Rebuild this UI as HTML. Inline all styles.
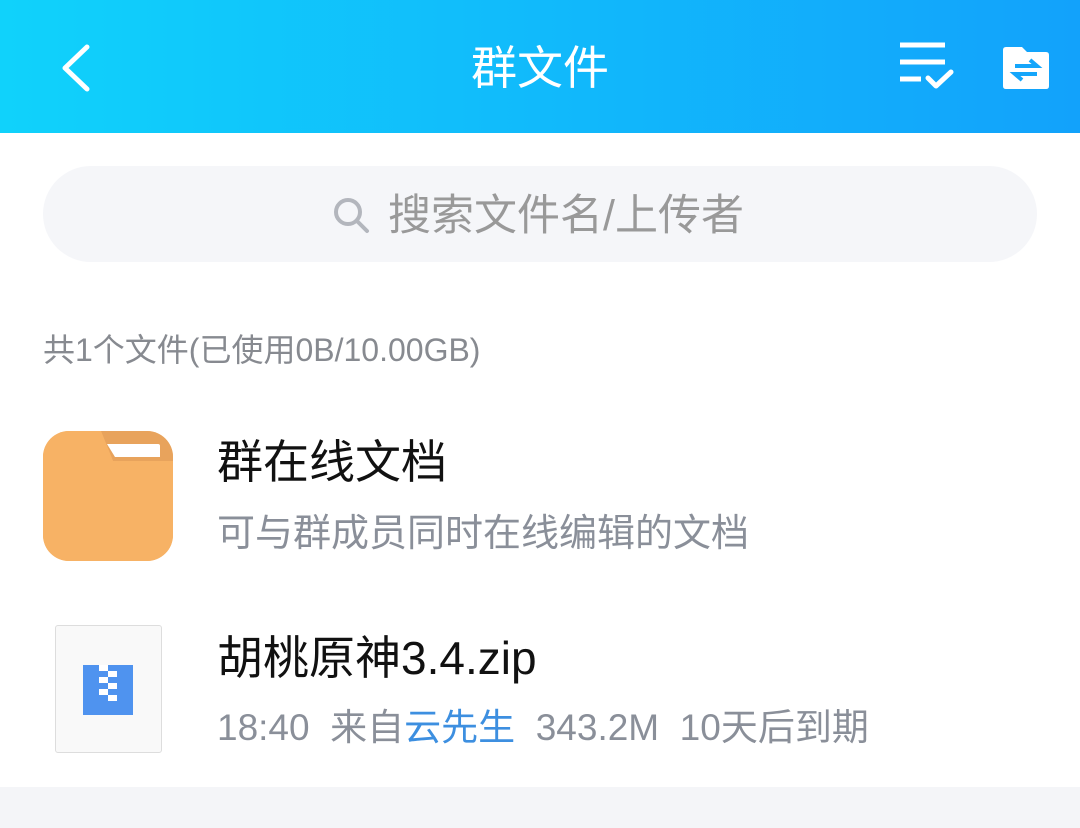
<html><head><style>
body{margin:0;width:1080px;height:828px;overflow:hidden;background:#fff;font-family:"Liberation Sans","Noto Sans CJK SC",sans-serif;position:relative}
.a{position:absolute;white-space:nowrap}
</style></head><body>
<div class="a" style="left:0;top:0;width:1080px;height:133px;background:linear-gradient(90deg,#10d2fb,#12a2fb)"></div>
<svg class="a" style="left:55px;top:42px" width="40" height="52"><path d="M32 5 L10 26 L32 47" stroke="#fff" stroke-width="5" fill="none" stroke-linecap="round" stroke-linejoin="round"/></svg>
<div class="a" style="left:0;width:1080px;top:40px;text-align:center;color:#fff;font-size:46px;line-height:56px">群文件</div>
<svg class="a" style="left:898px;top:40px" width="60" height="52"><g stroke="#fff" stroke-width="5"><path d="M2 5H47M2 22H47M2 39H23"/><path d="M30 38L38 46L53 32" fill="none" stroke-linecap="round" stroke-linejoin="round"/></g></svg>
<svg class="a" style="left:1002px;top:46px" width="48" height="45"><path d="M1 4Q1 1 4 1H20L25 6H44Q47 6 47 9V40Q47 43 44 43H4Q1 43 1 40Z" fill="#fff"/><g stroke="#14a6fb" stroke-width="4" fill="none"><path d="M13 20H35L28 14"/><path d="M35 28H13L20 34"/></g></svg>
<div class="a" style="left:43px;top:166px;width:994px;height:96px;border-radius:48px;background:#f5f6f9"></div>
<svg class="a" style="left:332px;top:196px" width="40" height="40"><circle cx="16" cy="16" r="12" stroke="#b3b6bd" stroke-width="4" fill="none"/><path d="M25 25L35 35" stroke="#b3b6bd" stroke-width="4" stroke-linecap="round"/></svg>
<div class="a" style="left:388px;top:190px;font-size:43px;line-height:52px;color:#999">搜索文件名/上传者</div>
<div class="a" style="left:43px;top:330px;font-size:32px;line-height:40px;color:#878a90">共1个文件(已使用0B/10.00GB)</div>
<svg class="a" style="left:43px;top:431px" width="130" height="130"><defs><clipPath id="c"><rect width="130" height="130" rx="26"/></clipPath></defs><g clip-path="url(#c)"><rect width="130" height="130" fill="#f7b265"/><path d="M58 0H130V30H70Z" fill="#e8a35c"/><path d="M64 13H115Q117 13 117 15V26H72Z" fill="#fff"/><rect x="0" y="30" width="130" height="100" fill="#f7b265"/><path d="M0 0H58L70 30H0Z" fill="#f7b265"/></g></svg>
<div class="a" style="left:217px;top:434px;font-size:46px;line-height:56px;color:#111">群在线文档</div>
<div class="a" style="left:217px;top:510px;font-size:38px;line-height:48px;color:#8a8f99">可与群成员同时在线编辑的文档</div>
<div class="a" style="left:55px;top:625px;width:105px;height:126px;background:#f9f9f9;border:1px solid #ddd;border-radius:3px"></div>
<svg class="a" style="left:83px;top:665px" width="50" height="50"><rect width="50" height="50" fill="#4f93ef"/><g fill="#fff"><rect x="16" y="0" width="9" height="6"/><rect x="25" y="6" width="9" height="6"/><rect x="16" y="12" width="9" height="6"/><rect x="25" y="18" width="9" height="6"/><rect x="16" y="24" width="9" height="6"/><rect x="25" y="30" width="9" height="6"/></g></svg>
<div class="a" style="left:217px;top:630px;font-size:46px;line-height:56px;color:#111">胡桃原神3.4.zip</div>
<div class="a" style="left:217px;top:704px;font-size:37px;line-height:48px;color:#8a8f99">18:40&nbsp; 来自<span style="color:#3d8fe0">云先生</span>&nbsp; 343.2M&nbsp; 10天后到期</div>
<div class="a" style="left:0;top:787px;width:1080px;height:41px;background:#f4f5f8"></div>
</body></html>
